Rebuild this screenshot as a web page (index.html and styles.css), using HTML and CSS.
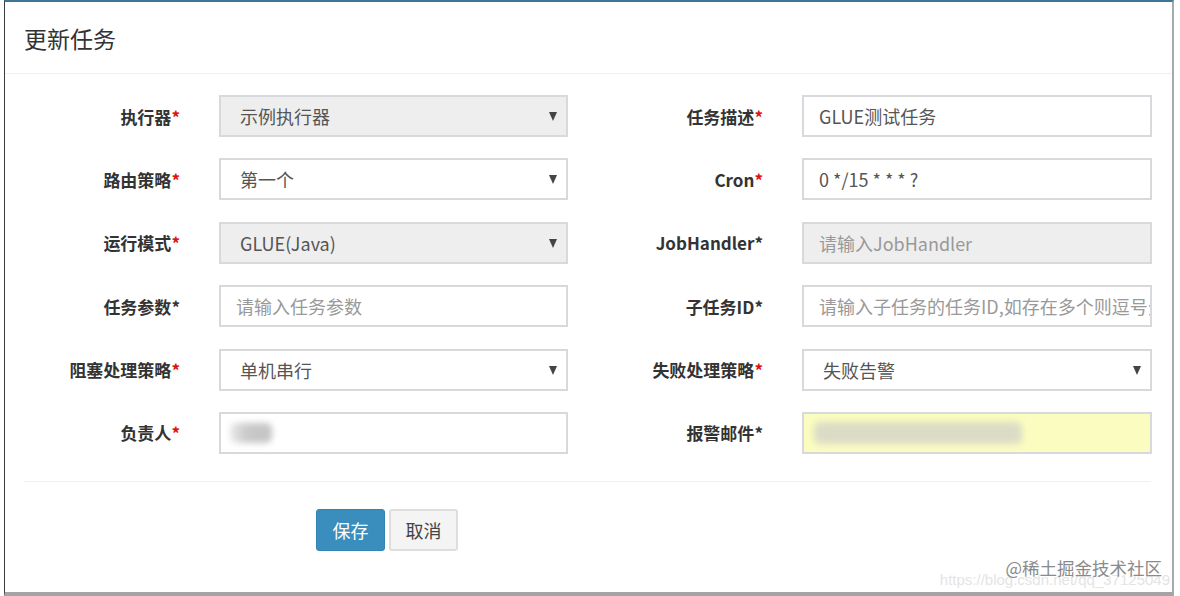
FILE: index.html
```html
<!DOCTYPE html>
<html lang="zh">
<head>
<meta charset="utf-8">
<title>更新任务</title>
<link rel="stylesheet" href="styles.css">
</head>
<body>
<div class="modal">
  <div class="modal-header">
    <h4 class="modal-title">更新任务</h4>
  </div>
  <div class="modal-body">
    <div class="form-grid">
      <label class="lbl">执行器<span class="req">*</span></label>
      <div class="ctl select disabled"><span class="val">示例执行器</span><span class="caret"></span></div>
      <label class="lbl">任务描述<span class="req">*</span></label>
      <div class="ctl input"><span class="val">GLUE测试任务</span></div>

      <label class="lbl">路由策略<span class="req">*</span></label>
      <div class="ctl select"><span class="val">第一个</span><span class="caret"></span></div>
      <label class="lbl">Cron<span class="req">*</span></label>
      <div class="ctl input"><span class="val">0 */15 * * * ?</span></div>

      <label class="lbl">运行模式<span class="req">*</span></label>
      <div class="ctl select disabled"><span class="val">GLUE(Java)</span><span class="caret"></span></div>
      <label class="lbl">JobHandler<span class="star">*</span></label>
      <div class="ctl input disabled"><span class="ph">请输入JobHandler</span></div>

      <label class="lbl">任务参数<span class="star">*</span></label>
      <div class="ctl input"><span class="ph">请输入任务参数</span></div>
      <label class="lbl">子任务ID<span class="star">*</span></label>
      <div class="ctl input"><span class="ph clip">请输入子任务的任务ID,如存在多个则逗号分隔</span></div>

      <label class="lbl">阻塞处理策略<span class="req">*</span></label>
      <div class="ctl select"><span class="val">单机串行</span><span class="caret"></span></div>
      <label class="lbl">失败处理策略<span class="req">*</span></label>
      <div class="ctl select"><span class="val">失败告警</span><span class="caret"></span></div>

      <label class="lbl">负责人<span class="req">*</span></label>
      <div class="ctl input"><span class="blur blur-owner"></span></div>
      <label class="lbl">报警邮件<span class="star">*</span></label>
      <div class="ctl input autofill"><span class="blur blur-mail"></span></div>
    </div>
    <div class="divider"></div>
    <div class="actions">
      <button class="btn btn-primary">保存</button>
      <button class="btn btn-default">取消</button>
    </div>
  </div>
  <div class="watermark">
    <div class="wm-main">@稀土掘金技术社区</div>
    <div class="wm-url">https://blog.csdn.net/qq_37125049</div>
  </div>
</div>
</body>
</html>
```

FILE: styles.css
```css
* { box-sizing: border-box; }
html, body {
  margin: 0;
  padding: 0;
  background: #fff;
  font-family: "Noto Sans CJK SC", "Open Sans", "Liberation Sans", sans-serif;
}
.modal {
  position: relative;
  margin-left: 4px;
  width: 1170px;
  height: 596px;
  border-left: 1px solid #3a3a3a;
  border-right: 2px solid #a9a9a9;
  border-top: 2px solid #3f7596;
  border-bottom: 4px solid #a4a4a4;
  background: #fff;
  overflow: hidden;
}
.modal-header {
  height: 72px;
  border-bottom: 1px solid #f0f0f0;
  padding: 0 19px;
  display: flex;
  align-items: center;
}
.modal-title {
  margin: 0;
  font-size: 23px;
  font-weight: 400;
  color: #333;
  line-height: 1;
  padding-top: 1px;
}
.modal-body {
  padding: 21px 19px 0;
}
.form-grid {
  display: grid;
  grid-template-columns: 156px 349px 156px 350px;
  column-gap: 39px;
  row-gap: 21.4px;
  grid-auto-rows: 42px;
}
.lbl {
  display: flex;
  align-items: center;
  justify-content: flex-end;
  font-size: 17px;
  font-weight: 700;
  color: #333;
  white-space: nowrap;
}
.req { color: #e01010; }
.star { color: #333; }
.ctl {
  position: relative;
  border: 2px solid #d7d9dc;
  background: #fff;
  display: flex;
  align-items: center;
  font-size: 18px;
  color: #555;
  overflow: hidden;
  white-space: nowrap;
}
.ctl.input { padding-left: 15px; }
.ctl.select { padding-left: 19px; }
.ctl.disabled { background: #eee; }
.ctl.autofill { background: #fafcc0; }
.ph { color: #999; }
.caret {
  position: absolute;
  right: 9px;
  top: 50%;
  margin-top: -4px;
  width: 0;
  height: 0;
  border-left: 4px solid transparent;
  border-right: 4px solid transparent;
  border-top: 9px solid #444;
}
.blur {
  display: block;
  height: 20px;
  filter: blur(3px);
  border-radius: 6px;
}
.blur-owner {
  width: 42px;
  margin-left: -6px;
  background: linear-gradient(90deg, #eaeaea 0%, #c9c9c9 40%, #c4c4c4 100%);
}
.blur-mail {
  width: 208px;
  height: 22px;
  margin-left: -5px;
  background: #dcdcc6;
}
.divider {
  margin-top: 27px;
  height: 1px;
  background: #f0f0f0;
  width: 1127px;
}
.actions {
  padding-left: 292px;
  padding-top: 27px;
  display: flex;
  gap: 4px;
}
.btn {
  width: 69px;
  height: 42px;
  border-radius: 3px;
  font-family: inherit;
  font-size: 18px;
  padding: 0;
  cursor: pointer;
}
.btn-primary {
  background: #3a8ebd;
  border: 1px solid #3583b0;
  color: #fff;
}
.btn-default {
  background: #f4f4f4;
  border: 2px solid #dedede;
  color: #444;
}
.watermark {
  position: absolute;
  right: 2px;
  bottom: 4px;
  text-align: right;
  pointer-events: none;
}
.wm-main {
  font-size: 17.5px;
  color: #8a8a8a;
  line-height: 20px;
  margin-right: 8px;
  text-shadow: 0 0 2px #fff;
  position: relative;
  z-index: 2;
}
.wm-url {
  font-family: "Liberation Sans", sans-serif;
  font-size: 15px;
  color: #e4e4e4;
  line-height: 16px;
  margin-top: -6px;
}
```
